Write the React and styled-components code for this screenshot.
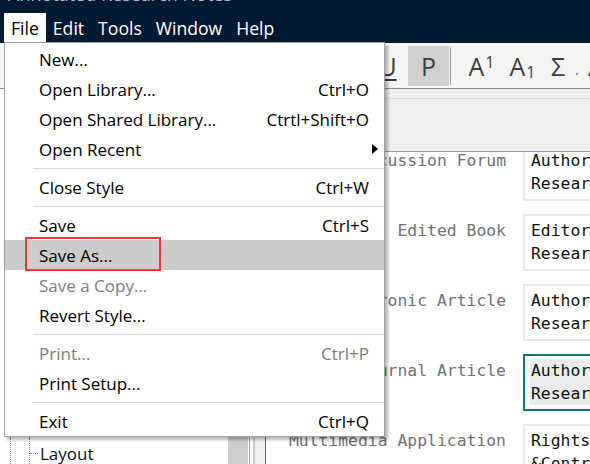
import React from "react"
import styled, { createGlobalStyle, css } from "styled-components"

const NAVY = "#011a33"
const UI_FONT = `"Open Sans", "Noto Sans", sans-serif`
const MONO = `"DejaVu Sans Mono", "Liberation Mono", monospace`

const GlobalStyle = createGlobalStyle`
  html, body {
    margin: 0;
    padding: 0;
    overflow: hidden;
    background: #fff;
  }
  body {
    font-family: ${UI_FONT};
  }
`

const menuEntries = [
  { label: "New..." },
  { label: "Open Library...", shortcut: "Ctrl+O" },
  { label: "Open Shared Library...", shortcut: "Ctrtl+Shift+O" },
  { label: "Open Recent", submenu: true },
  { sep: true },
  { label: "Close Style", shortcut: "Ctrl+W" },
  { sep: true },
  { label: "Save", shortcut: "Ctrl+S" },
  { label: "Save As...", active: true, marked: true },
  { label: "Save a Copy...", disabled: true },
  { label: "Revert Style..." },
  { sep: true },
  { label: "Print...", shortcut: "Ctrl+P", disabled: true },
  { label: "Print Setup..." },
  { sep: true },
  { label: "Exit", shortcut: "Ctrl+Q" },
]

const treeRows = [
  { depth: 0, label: "Style Info" },
  { depth: 1, label: "About this Style" },
  { depth: 0, label: "Citations" },
  { depth: 1, label: "Templates" },
  { depth: 1, label: "Ambiguous Citations" },
  { depth: 1, label: "Author Lists" },
  { depth: 1, label: "Author Name" },
  { depth: 0, label: "Bibliography" },
  { depth: 1, label: "Templates" },
  { depth: 1, label: "Field Substitutions" },
  { depth: 1, label: "Sections" },
  { depth: 1, label: "Layout" },
]

const fields = [
  { label: "Discussion Forum", lines: ["Author. Year. Title", "Research Notes"] },
  { label: "Edited Book", lines: ["Editor, ed. Year", "Research Notes"] },
  { label: "Electronic Article", lines: ["Author. Year. Title", "Research Notes"] },
  { label: "Journal Article", lines: ["Author. Year. Title", "Research Notes"], focused: true },
  { label: "Multimedia Application", lines: ["Rights", "&Contributors"] },
]

export default function App() {
  return (
    <>
      <GlobalStyle />
      <Window>
        <TitleBar>
          <Title>Annotated Research Notes</Title>
        </TitleBar>
        <MenuBar>
          <MenuTitle $open>File</MenuTitle>
          <MenuTitle>Edit</MenuTitle>
          <MenuTitle>Tools</MenuTitle>
          <MenuTitle>Window</MenuTitle>
          <MenuTitle>Help</MenuTitle>
        </MenuBar>

        <Toolbar>
          <Grip />
          <ToolGroup>
            <ToolButton $underline>U</ToolButton>
            <ToolButton $pressed>P</ToolButton>
            <ToolSep />
            <ToolButton>
              A<Sup>1</Sup>
            </ToolButton>
            <ToolButton>
              A<Sub>1</Sub>
            </ToolButton>
            <ToolButton $w={30}>Σ</ToolButton>
            <ToolDot />
            <ToolButton $w={30}>A</ToolButton>
          </ToolGroup>
        </Toolbar>

        <Body>
          <LeftPanel>
            <TreeArea>
              {treeRows.map((row, i) => (
                <TreeRow key={i}>
                  {Array.from({ length: row.depth }).map((_, g) => (
                    <Guide key={g} />
                  ))}
                  <Branch />
                  <TreeLabel>{row.label}</TreeLabel>
                </TreeRow>
              ))}
            </TreeArea>
            <Scrollbar />
          </LeftPanel>
          <Splitter />
          <Main>
            <MainHeader>
              <HeaderRule />
            </MainHeader>
            <FieldList>
              <FieldScroller>
                {fields.map((f) => (
                  <FieldRow key={f.label}>
                    <FieldLabel>{f.label}</FieldLabel>
                    <FieldBox $focused={f.focused}>
                      {f.lines.map((l) => (
                        <FieldText key={l} $focused={f.focused}>
                          {l}
                        </FieldText>
                      ))}
                    </FieldBox>
                  </FieldRow>
                ))}
              </FieldScroller>
            </FieldList>
          </Main>
        </Body>

        <Dropdown>
          {menuEntries.map((e, i) =>
            e.sep ? (
              <MenuSeparator key={i} />
            ) : (
              <MenuItem
                key={i}
                $active={e.active}
                $disabled={e.disabled}
                $marked={e.marked}
              >
                <span>{e.label}</span>
                {e.shortcut && <Shortcut>{e.shortcut}</Shortcut>}
                {e.submenu && <SubArrow />}
              </MenuItem>
            )
          )}
        </Dropdown>
      </Window>
    </>
  )
}

const Window = styled.div`
  position: relative;
  width: 590px;
  height: 464px;
  overflow: hidden;
  display: flex;
  flex-direction: column;
  background: #fff;
`

const TitleBar = styled.div`
  height: 13px;
  flex-shrink: 0;
  overflow: hidden;
  background: ${NAVY};
`

const Title = styled.div`
  margin: -18px 0 0 8px;
  font-size: 18px;
  line-height: 24px;
  color: #b9bfc7;
  white-space: nowrap;
`

const MenuBar = styled.div`
  height: 30px;
  flex-shrink: 0;
  display: flex;
  padding-left: 4px;
  background: ${NAVY};
`

const MenuTitle = styled.div`
  display: flex;
  align-items: center;
  padding: 0 7px;
  font-size: 17.6px;
  color: #fff;
  ${(p) =>
    p.$open &&
    css`
      background: #fff;
      color: #000;
    `}
`

const Toolbar = styled.div`
  height: 45px;
  flex-shrink: 0;
  display: flex;
  align-items: center;
  background: #f4f4f4;
  border-bottom: 1px solid #8a8a8a;
`

const Grip = styled.div`
  width: 2px;
  height: 15px;
  margin-left: 1px;
  background: #2b2b2b;
`

const ToolGroup = styled.div`
  display: flex;
  align-items: center;
  margin-left: 366px;
  flex-shrink: 0;
`

const ToolButton = styled.div`
  width: ${(p) => p.$w || 41}px;
  height: 40px;
  flex-shrink: 0;
  display: flex;
  align-items: center;
  justify-content: center;
  font-size: 25px;
  color: #3d3d3d;
  background: ${(p) => (p.$pressed ? "#d0d0d0" : "transparent")};
  text-decoration: ${(p) => (p.$underline ? "underline" : "none")};
  text-decoration-thickness: 2px;
  text-underline-offset: 3px;
`

const Sup = styled.span`
  font-size: 16px;
  line-height: 1;
  align-self: flex-start;
  margin: 8px 0 0 1px;
`

const Sub = styled.span`
  font-size: 16px;
  line-height: 1;
  align-self: flex-end;
  margin: 0 0 6px 1px;
`

const ToolSep = styled.div`
  width: 1px;
  height: 38px;
  margin: 0 10px 0 1px;
  background: #9a9a9a;
`

const ToolDot = styled.div`
  width: 2px;
  height: 2px;
  margin: 16px 3px 0 3px;
  background: #8a8a8a;
  flex-shrink: 0;
`

const Body = styled.div`
  flex: 1;
  min-height: 0;
  display: flex;
`

const LeftPanel = styled.div`
  width: 249px;
  flex-shrink: 0;
  display: flex;
  background: #fff;
`

const TreeArea = styled.div`
  flex: 1;
  padding-top: 19px;
  overflow: hidden;
`

const TreeRow = styled.div`
  height: 30px;
  display: flex;
  align-items: center;
  padding-left: 10px;
`

const Guide = styled.div`
  width: 19px;
  height: 100%;
  flex-shrink: 0;
  border-left: 1px dotted #8a8a8a;
  box-sizing: border-box;
`

const Branch = styled.div`
  width: 9px;
  height: 100%;
  flex-shrink: 0;
  display: flex;
  align-items: center;
  border-left: 1px dotted #8a8a8a;
  box-sizing: border-box;

  &::after {
    content: "";
    flex: 1;
    border-top: 1px dotted #8a8a8a;
  }
`

const TreeLabel = styled.span`
  margin-left: 2px;
  font-size: 17px;
  color: #111;
  white-space: nowrap;
`

const Scrollbar = styled.div`
  width: 20px;
  margin-right: 1px;
  background: #cdcdcd;
`

const Splitter = styled.div`
  width: 17px;
  flex-shrink: 0;
  background: linear-gradient(
    to right,
    #a3a3a3 0 1px,
    #fafafa 1px 4px,
    #c9c9c9 4px 6px,
    #efefef 6px 16px,
    #6a6a6a 16px 17px
  );
`

const Main = styled.div`
  flex: 1;
  min-width: 0;
  display: flex;
  flex-direction: column;
`

const MainHeader = styled.div`
  height: 62px;
  flex-shrink: 0;
  background: #efefef;
  border-bottom: 1px solid #9d9d9d;
`

const HeaderRule = styled.div`
  height: 9px;
  border-bottom: 1px solid #d9d9d9;
`

const FieldList = styled.div`
  flex: 1;
  min-height: 0;
  overflow: hidden;
`

const FieldScroller = styled.div`
  margin-top: -8px;
`

const FieldRow = styled.div`
  display: grid;
  grid-template-columns: 240px 320px;
  column-gap: 17px;
  margin-bottom: 13px;
`

const FieldLabel = styled.div`
  padding-top: 5px;
  font-family: ${MONO};
  font-size: 16.4px;
  line-height: 23px;
  text-align: right;
  white-space: nowrap;
  color: #717171;
`

const FieldBox = styled.div`
  padding: 3px 6px 4px;
  border: 2px solid ${(p) => (p.$focused ? "#0e7a76" : "#e8e8e8")};
  font-family: ${MONO};
  font-size: 16.4px;
  line-height: 23px;
  color: #111;
  white-space: nowrap;
`

const FieldText = styled.div`
  margin-left: -1px;
  padding-left: 1px;
  background: ${(p) => (p.$focused ? "#ebebeb" : "transparent")};
`

const Dropdown = styled.div`
  position: absolute;
  left: 4px;
  top: 42px;
  width: 381px;
  box-sizing: border-box;
  padding-top: 1px;
  background: #fff;
  border: 1px solid #a0a0a0;
  box-shadow: 3px 3px 3px rgba(0, 0, 0, 0.28);
`

const MenuItem = styled.div`
  position: relative;
  height: 30px;
  display: flex;
  align-items: center;
  padding: 0 15px 0 34px;
  font-size: 17px;
  color: ${(p) => (p.$disabled ? "#7d7d7d" : "#000")};
  background: ${(p) => (p.$active ? "#cccccc" : "transparent")};
  white-space: nowrap;

  ${(p) =>
    p.$marked &&
    css`
      &::after {
        content: "";
        position: absolute;
        left: 20px;
        top: -3px;
        width: 136px;
        height: 34px;
        box-sizing: border-box;
        border: 2.5px solid #f03838;
      }
    `}
`

const Shortcut = styled.span`
  margin-left: auto;
`

const SubArrow = styled.span`
  margin-left: auto;
  margin-right: -9px;
  width: 0;
  height: 0;
  border-top: 5px solid transparent;
  border-bottom: 5px solid transparent;
  border-left: 6px solid #000;
`

const MenuSeparator = styled.div`
  height: 8px;
  margin-left: 28px;
  display: flex;
  align-items: center;

  &::before {
    content: "";
    flex: 1;
    height: 1px;
    background: #d7d7d7;
  }
`
